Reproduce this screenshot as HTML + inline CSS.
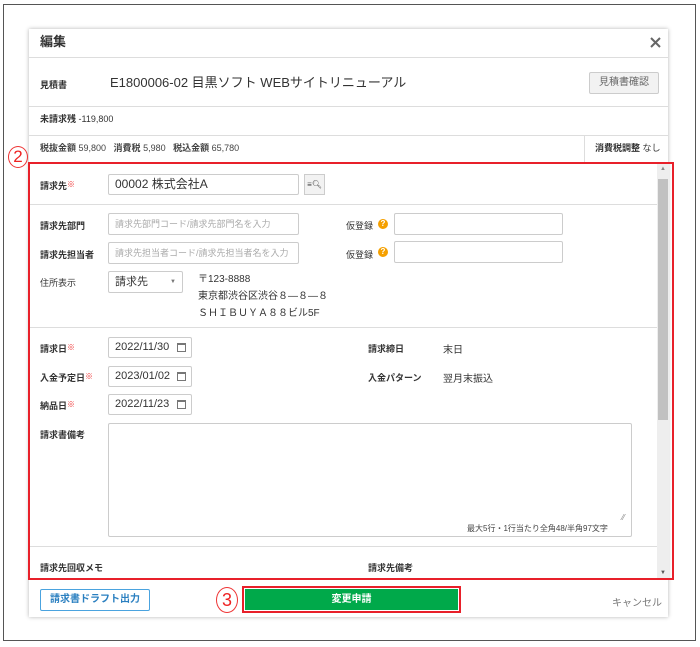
<!DOCTYPE html>
<html><head><meta charset="utf-8"><style>
*{box-sizing:border-box;margin:0;padding:0}
body{width:700px;height:647px;background:#fff;position:relative;overflow:hidden;font-family:"Liberation Sans","Noto Sans CJK JP",sans-serif;color:#333}
.a{position:absolute;white-space:nowrap}
.l{font-size:9px;color:#333;font-weight:bold}
.hr{position:absolute;height:1px;background:#ddd}
.in{position:absolute;border:1px solid #ccc;border-radius:2px;background:#fff;font-size:12px;padding-left:6px;line-height:19px;color:#333}
.ph{font-size:9px;color:#aaa}
.cal{position:absolute;right:5px;top:5px;width:9px;height:9px;border:1px solid #777;border-top-width:2px}
.q{position:absolute;width:10px;height:10px;border-radius:50%;background:#f5a000;color:#fff;font-size:8px;font-weight:bold;text-align:center;line-height:10px}
.req{color:#e33;font-size:8px;vertical-align:top}
</style></head><body>
<div class="a" style="left:3px;top:4px;width:693px;height:637px;border:1px solid #555"></div>
<div class="a" style="left:29px;top:29px;width:639px;height:588px;background:#fff;box-shadow:0 0 4px rgba(0,0,0,.3)"></div>
<div class="a" style="left:40px;top:34px;font-size:13px;font-weight:bold;line-height:16px">編集</div>
<svg class="a" style="left:650px;top:37px" width="11" height="11"><path d="M1 1L10 10M10 1L1 10" stroke="#666" stroke-width="2"/></svg>
<div class="hr" style="left:29px;top:57px;width:639px"></div>
<div class="a l" style="left:40px;top:78px">見積書</div>
<div class="a" style="left:110px;top:75px;font-size:13px;line-height:16px">E1800006-02 目黒ソフト WEBサイトリニューアル</div>
<div class="a" style="left:589px;top:72px;width:70px;height:22px;border:1px solid #ccc;background:#f2f2f2;border-radius:2px;font-size:10px;color:#666;text-align:center;line-height:20px">見積書確認</div>
<div class="hr" style="left:29px;top:106px;width:639px"></div>
<div class="a" style="left:40px;top:114px;font-size:9px;line-height:11px"><b>未請求残</b> -119,800</div>
<div class="hr" style="left:29px;top:135px;width:639px"></div>
<div class="a" style="left:40px;top:143px;font-size:9px;line-height:11px;color:#444"><b>税抜金額</b> 59,800 &nbsp;&nbsp;<b>消費税</b> 5,980 &nbsp;&nbsp;<b>税込金額</b> 65,780</div>
<div class="a" style="left:584px;top:135px;width:1px;height:28px;background:#ddd"></div>
<div class="a" style="left:595px;top:143px;font-size:9px;line-height:11px"><b>消費税調整</b> なし</div>
<div class="a" style="left:8px;top:146px;width:20px;height:22px;border:1px solid #e33;border-radius:50%;color:#e22;font-size:17px;text-align:center;line-height:20px">2</div>
<div class="a" style="left:657px;top:164px;width:12px;height:414px;background:#eee"></div>
<div class="a" style="left:658px;top:179px;width:10px;height:241px;background:#c1c1c1"></div>
<div class="a" style="left:660px;top:166px;font-size:6px;color:#888">▲</div>
<div class="a" style="left:660px;top:570px;font-size:6px;color:#555">▼</div>
<div class="a l" style="left:40px;top:179px">請求先<span class="req">※</span></div>
<div class="in" style="left:108px;top:174px;width:191px;height:21px">00002 株式会社A</div>
<div class="a" style="left:304px;top:174px;width:21px;height:21px;border:1px solid #ccc;background:#f2f2f2;font-size:8px;text-align:center;line-height:19px;color:#444">≡🔍︎</div>
<div class="hr" style="left:30px;top:204px;width:627px"></div>
<div class="a l" style="left:40px;top:219px">請求先部門</div>
<div class="in ph" style="left:108px;top:213px;width:191px;height:22px;line-height:20px">請求先部門コード/請求先部門名を入力</div>
<div class="a" style="left:346px;top:219px;font-size:9px">仮登録</div>
<div class="q" style="left:378px;top:219px">?</div>
<div class="in" style="left:394px;top:213px;width:169px;height:22px"></div>
<div class="a l" style="left:40px;top:248px">請求先担当者</div>
<div class="in ph" style="left:108px;top:242px;width:191px;height:22px;line-height:20px">請求先担当者コード/請求先担当者名を入力</div>
<div class="a" style="left:346px;top:248px;font-size:9px">仮登録</div>
<div class="q" style="left:378px;top:247px">?</div>
<div class="in" style="left:394px;top:241px;width:169px;height:22px"></div>
<div class="a" style="left:40px;top:276px;font-size:9px">住所表示</div>
<div class="in" style="left:108px;top:271px;width:75px;height:22px;font-size:11px;line-height:20px">請求先<span style="position:absolute;right:6px;font-size:6px;color:#777">▼</span></div>
<div class="a" style="left:198px;top:271px;font-size:10px;line-height:17px;color:#333">〒123-8888<br>東京都渋谷区渋谷８—８—８<br>ＳＨＩＢＵＹＡ８８ビル5F</div>
<div class="hr" style="left:30px;top:327px;width:627px"></div>
<div class="a l" style="left:40px;top:342px">請求日<span class="req">※</span></div>
<div class="in" style="left:108px;top:337px;width:84px;height:21px;font-size:11px">2022/11/30<span class="cal"></span></div>
<div class="a l" style="left:368px;top:342px">請求締日</div>
<div class="a" style="left:443px;top:341px;font-size:10px">末日</div>
<div class="a l" style="left:40px;top:371px">入金予定日<span class="req">※</span></div>
<div class="in" style="left:108px;top:366px;width:84px;height:21px;font-size:11px">2023/01/02<span class="cal"></span></div>
<div class="a l" style="left:368px;top:371px">入金パターン</div>
<div class="a" style="left:443px;top:370px;font-size:10px">翌月末振込</div>
<div class="a l" style="left:40px;top:399px">納品日<span class="req">※</span></div>
<div class="in" style="left:108px;top:394px;width:84px;height:21px;font-size:11px">2022/11/23<span class="cal"></span></div>
<div class="a l" style="left:40px;top:428px">請求書備考</div>
<div class="in" style="left:108px;top:423px;width:524px;height:114px"></div>
<div class="a" style="left:467px;top:523px;font-size:8px;color:#444">最大5行・1行当たり全角48/半角97文字</div>
<div class="a" style="left:622px;top:513px;font-size:8px;color:#888">⁄⁄</div>
<div class="hr" style="left:30px;top:546px;width:627px"></div>
<div class="a l" style="left:40px;top:561px">請求先回収メモ</div>
<div class="a l" style="left:368px;top:561px">請求先備考</div>
<div class="a" style="left:28px;top:162px;width:646px;height:418px;border:2px solid #e8202a"></div>
<div class="a" style="left:40px;top:589px;width:110px;height:22px;border:1px solid #4aa3df;border-radius:2px;color:#2a7fc0;font-size:10px;font-weight:bold;text-align:center;line-height:20px">請求書ドラフト出力</div>
<div class="a" style="left:216px;top:587px;width:22px;height:26px;border:1px solid #e33;border-radius:50%;color:#e22;font-size:18px;text-align:center;line-height:24px">3</div>
<div class="a" style="left:242px;top:586px;width:219px;height:27px;border:2px solid #e8202a"></div>
<div class="a" style="left:245px;top:589px;width:213px;height:21px;background:#00a94a;color:#fff;font-size:10px;font-weight:bold;text-align:center;line-height:21px">変更申請</div>
<div class="a" style="left:612px;top:594px;font-size:10px;color:#777">キャンセル</div>
</body></html>
